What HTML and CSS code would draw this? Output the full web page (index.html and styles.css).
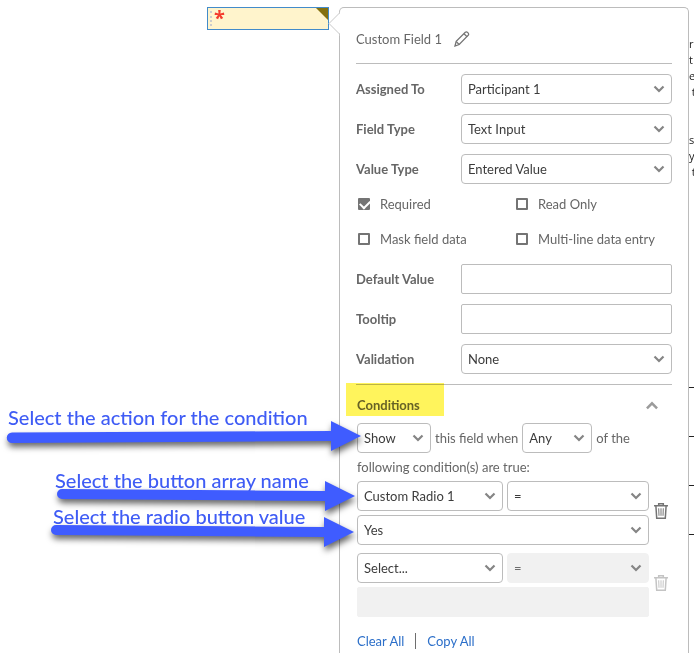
FILE: index.html
```
<!DOCTYPE html>
<html lang="en">
<head>
  <meta charset="UTF-8" />
  <meta name="viewport" content="width=device-width, initial-scale=1.0" />
  <title>Custom Field 1</title>
  <link rel="stylesheet" href="styles.css">
</head>
<body>

  <!-- shared icons -->
  <svg class="symbols" aria-hidden="true">
    <symbol id="chevron" viewBox="0 0 12 8">
      <path d="M1.5 1.5 6 6l4.500-4.500" fill="none" stroke="currentColor" stroke-width="2.200"/>
    </symbol>
    <symbol id="trash" viewBox="0 0 14 16">
      <path d="M0 2.700h14M4.700 2.500V.8h4.600v1.700M1.900 3l.8 12.200h8.600L12.100 3" fill="none" stroke="currentColor" stroke-width="1.500"/>
      <path d="M4.700 5.300l.3 7.500M7 5.300v7.500M9.300 5.300l-.3 7.500" fill="none" stroke="currentColor"/>
    </symbol>
  </svg>

  <div class="page">
    <main class="document">
      <div class="form-field">
        <span class="grip"></span>
        <span class="star">*</span>
        <span class="corner"></span>
      </div>
    </main>

    <form class="panel">
      <svg class="pointer" viewBox="0 0 12 24" aria-hidden="true">
        <path d="M12 1 1 11.500 12 22z" fill="#fff"/>
        <path d="M11.500 0v1L1 11.500 11.500 22v2" fill="none" stroke="#c8c8c8"/>
      </svg>

      <header class="panel-head">
        <h1>Custom Field 1</h1>
        <button type="button" class="icon-btn" aria-label="Rename field">
          <svg width="16" height="16" viewBox="0 0 16 16" fill="none" stroke="#747474" stroke-width="1.300">
            <path d="M1 15l1.200-4.600L11.300 1.300q1.200-1 2.500.3t.5 2.600L5.200 13.500z"/>
            <path d="M2.300 10.600l2.800 2.900M10 2.700l3.200 3.200"/>
          </svg>
        </button>
      </header>

      <div class="row">
        <label for="assigned">Assigned To</label>
        <span class="select"><select id="assigned"><option>Participant 1</option></select><svg><use href="#chevron"/></svg></span>
      </div>
      <div class="row">
        <label for="type">Field Type</label>
        <span class="select"><select id="type"><option>Text Input</option></select><svg><use href="#chevron"/></svg></span>
      </div>
      <div class="row">
        <label for="value-type">Value Type</label>
        <span class="select"><select id="value-type"><option>Entered Value</option></select><svg><use href="#chevron"/></svg></span>
      </div>

      <div class="checks">
        <label><input type="checkbox" checked> Required</label>
        <label><input type="checkbox"> Read Only</label>
        <label><input type="checkbox"> Mask field data</label>
        <label><input type="checkbox"> Multi-line data entry</label>
      </div>

      <div class="row">
        <label for="default">Default Value</label>
        <input type="text" id="default">
      </div>
      <div class="row">
        <label for="tooltip">Tooltip</label>
        <input type="text" id="tooltip">
      </div>
      <div class="row">
        <label for="validation">Validation</label>
        <span class="select"><select id="validation"><option>None</option></select><svg><use href="#chevron"/></svg></span>
      </div>

      <section class="conditions">
        <div class="section-head">
          <h2>Conditions</h2>
          <button type="button" class="icon-btn collapse" aria-label="Collapse conditions"><svg><use href="#chevron"/></svg></button>
          <span class="highlight"></span>
        </div>

        <div class="sentence">
          <span class="select show"><select aria-label="Action"><option>Show</option></select><svg><use href="#chevron"/></svg></span>
          <span>this field when</span>
          <span class="select any"><select aria-label="Match"><option>Any</option></select><svg><use href="#chevron"/></svg></span>
          <span>of the</span>
        </div>
        <p>following condition(s) are true:</p>

        <div class="condition">
          <div class="condition-fields">
            <span class="select"><select aria-label="Field"><option>Custom Radio 1</option></select><svg><use href="#chevron"/></svg></span>
            <span class="select"><select aria-label="Operator"><option>=</option></select><svg><use href="#chevron"/></svg></span>
            <span class="select wide"><select aria-label="Value"><option>Yes</option></select><svg><use href="#chevron"/></svg></span>
          </div>
          <button type="button" class="icon-btn trash" aria-label="Delete condition"><svg><use href="#trash"/></svg></button>
        </div>

        <div class="condition">
          <div class="condition-fields">
            <span class="select"><select aria-label="Field"><option>Select...</option></select><svg><use href="#chevron"/></svg></span>
            <span class="select"><select aria-label="Operator" disabled><option>=</option></select><svg><use href="#chevron"/></svg></span>
            <input type="text" class="wide" aria-label="Value" disabled>
          </div>
          <button type="button" class="icon-btn trash" aria-label="Delete condition" disabled><svg><use href="#trash"/></svg></button>
        </div>

        <div class="links">
          <a href="#">Clear All</a>
          <a href="#">Copy All</a>
        </div>
      </section>

      <!-- callouts over the panel edge -->
      <div class="callout action">
        <span>Select the action for the condition</span>
        <svg width="354" height="30" viewBox="0 0 354 30"><path d="M5 11.500 324 10V0l30 15-30 15V20L5 22A5 5 0 0 1 5 11.500z"/></svg>
      </div>
      <div class="callout array">
        <span>Select the button array name</span>
        <svg width="298" height="30" viewBox="0 0 298 30"><path d="M5 8 268 10V0l30 15-30 15V20L5 18A5 5 0 0 1 5 8z"/></svg>
      </div>
      <div class="callout value">
        <span>Select the radio button value</span>
        <svg width="303" height="30" viewBox="0 0 303 30"><path d="M5 8 273 10V0l30 15-30 15V20L5 18A5 5 0 0 1 5 8z"/></svg>
      </div>
    </form>

    <aside class="document-edge">
      <p>r<br>t<br>e<br>&nbsp;t</p>
      <p>s<br>y<br>&nbsp;t</p>
      <div class="lines"><i></i><i></i><i></i><i></i></div>
    </aside>
  </div>

</body>
</html>
```
FILE: styles.css
```
* {
  box-sizing: border-box;
}

body {
  margin: 0;
  background: #fff;
  color: #666;
  font-family: Lato, "Open Sans", sans-serif;
  font-size: 13px;
  line-height: 20px;
}

.symbols {
  display: none;
}

.page {
  display: flex;
  height: 100vh;
  padding-top: 7px;
  overflow: hidden;
}

.document {
  flex: 1;
  display: flex;
  justify-content: flex-end;
  align-items: flex-start;
  padding-right: 10px;
}

.form-field {
  position: relative;
  width: 122px;
  height: 23px;
  display: flex;
  padding: 3px 2px;
  gap: 2px;
  background: #fff4cc;
  border: 1px solid #428bca;
}

.grip {
  height: 15px;
  border-left: 2px dotted #ccc;
}

.star {
  color: #f43b2d;
  font: bold 20px/14px "Open Sans", sans-serif;
}

.corner {
  position: absolute;
  top: 0;
  right: 0;
  border-top: 12px solid #84700f;
  border-left: 12px solid transparent;
}

/* panel */
.panel {
  position: relative;
  width: 350px;
  padding: 0 16px;
  background: #fff;
  border: 1px solid #bcbcbc;
  border-bottom: 0;
  border-radius: 5px 5px 0 0;
}

.pointer {
  position: absolute;
  top: 4px;
  left: -12px;
  width: 12px;
  height: 24px;
}

.panel-head {
  display: flex;
  align-items: center;
  gap: 12px;
  height: 56px;
  padding-top: 6px;
  margin-bottom: 10px;
  border-bottom: 1px solid #bcbcbc;
}

h1, h2 {
  margin: 0;
  font-size: 13px;
  line-height: 20px;
}

h1 {
  font-weight: normal;
}

.icon-btn {
  display: flex;
  padding: 0;
  background: none;
  border: 0;
  cursor: pointer;
}

.row {
  display: flex;
  align-items: center;
  margin-bottom: 10px;
}

.row label {
  width: 105px;
  font-weight: bold;
}

.row .select,
.row input {
  flex: 1;
}

.select {
  position: relative;
  display: flex;
}

select,
input[type="text"] {
  width: 100%;
  min-width: 0;
  height: 30px;
  padding: 0 6px;
  background: #fff;
  border: 1px solid #bcbcbc;
  border-radius: 4px;
  color: #3c3c3c;
  font: inherit;
}

select {
  appearance: none;
}

input[type="text"] {
  border-radius: 2px;
}

select:disabled,
input[type="text"]:disabled {
  background: #f1f1f1;
  border-color: #f1f1f1;
  color: #6e6e6e;
  opacity: 1;
}

.select svg {
  position: absolute;
  top: 11px;
  right: 7px;
  width: 12px;
  height: 8px;
  color: #858585;
  pointer-events: none;
}

.checks {
  display: grid;
  grid-template-columns: 1fr 1fr;
  row-gap: 15px;
  margin-bottom: 15px;
}

.checks label {
  display: flex;
  align-items: center;
  gap: 10px;
  padding-left: 2px;
}

input[type="checkbox"] {
  position: relative;
  appearance: none;
  width: 12px;
  height: 12px;
  margin: 0;
  border: 2px solid #747474;
  border-radius: 1px;
}

input[type="checkbox"]:checked {
  background: #747474;
}

input[type="checkbox"]:checked::after {
  content: "";
  position: absolute;
  top: 0;
  left: 0;
  width: 8px;
  height: 5px;
  border: solid #fff;
  border-width: 0 0 2px 2px;
  transform: rotate(-45deg);
}

/* conditions */
.conditions {
  border-top: 1px solid #bcbcbc;
  padding-left: 1px;
}

.section-head {
  position: relative;
  display: flex;
  justify-content: space-between;
  align-items: center;
  height: 38px;
  padding-right: 13px;
  padding-top: 2px;
}

.highlight {
  position: absolute;
  top: -2px;
  left: -11px;
  width: 98px;
  height: 33px;
  background: #fff45c;
  mix-blend-mode: multiply;
}

.collapse svg {
  width: 14px;
  height: 9px;
  color: #9b9b9b;
  transform: rotate(180deg);
}

.sentence {
  display: flex;
  align-items: center;
  gap: 4px;
  white-space: nowrap;
}

.show {
  width: 74px;
}

.any {
  width: 70px;
}

.conditions p {
  margin: 4px 0;
}

.condition {
  display: flex;
  align-items: center;
  gap: 5px;
  margin-bottom: 8px;
}

.condition-fields {
  display: grid;
  grid-template-columns: 146px 1fr;
  gap: 4px;
  width: 292px;
}

.wide {
  grid-column: 1 / 3;
}

.trash {
  padding-bottom: 4px;
}

.trash svg {
  width: 14px;
  height: 16px;
  color: #747474;
}

.trash:disabled svg {
  color: #c4c4c4;
}

.links {
  display: flex;
  padding-top: 8px;
}

.links a {
  color: #2c6fc9;
  line-height: 16px;
  text-decoration: none;
}

.links a + a {
  padding-left: 11px;
  margin-left: 11px;
  border-left: 1px solid #6e6e6e;
}

/* callouts */
.callout {
  position: absolute;
  color: #3f5cf5;
  font-size: 20px;
  font-weight: 500;
  line-height: 24px;
  white-space: nowrap;
  pointer-events: none;
}

.callout span {
  position: absolute;
  left: 1px;
}

.callout svg {
  display: block;
  overflow: visible;
  fill: #3f5cff;
  filter: drop-shadow(1px 4px 3px rgba(0, 0, 0, 0.6));
}

.action {
  top: 413px;
  left: -333px;
}

.action span {
  top: -16px;
}

.array {
  top: 473px;
  left: -283px;
}

.value {
  top: 509px;
  left: -289px;
}

.array span,
.value span {
  top: -13px;
}

.array span {
  left: -2px;
}

.value span {
  left: 2px;
}

/* strip of the document right of the panel */
.document-edge {
  width: 5px;
  overflow: hidden;
  color: #222;
  font: 11px/16px "Open Sans", sans-serif;
}

.document-edge p {
  margin: 0;
  padding-top: 29px;
  white-space: nowrap;
}

.document-edge p + p {
  padding-top: 32px;
}

.lines {
  margin-top: 207px;
}

.lines i {
  display: block;
  height: 49px;
  border-top: 1px solid #222;
}
```
